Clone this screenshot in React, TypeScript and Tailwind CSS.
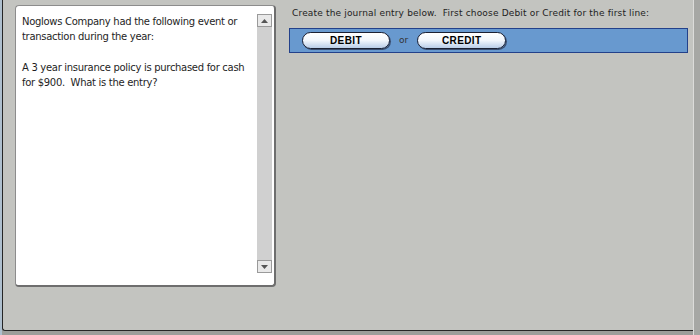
import React from "react";

function Arrow({ up }: { up?: boolean }) {
  return (
    <div className="w-[15px] h-[13px] bg-[#e9e9e9] border border-[#9a9a9a] flex items-center justify-center">
      <svg width="7" height="4" viewBox="0 0 7 4">
        {up ? <path d="M0 4 L3.5 0 L7 4 Z" fill="#555" /> : <path d="M0 0 L3.5 4 L7 0 Z" fill="#555" />}
      </svg>
    </div>
  );
}

function PillButton({ label, w }: { label: string; w: string }) {
  return (
    <button
      className={`${w} h-[17px] rounded-full border-[1.5px] border-[#1b2033] bg-gradient-to-b from-white via-[#f2f6fc] to-[#b9cde8] shadow-[1px_1px_0_#3a4e70] flex items-center justify-center text-[10px] font-bold text-black tracking-[0.4px]`}
      style={{ fontFamily: '"Liberation Sans", Arial, sans-serif' }}
    >
      {label}
    </button>
  );
}

export default function App() {
  return (
    <div className="w-[700px] h-[335px] flex bg-[#a3a4a1]" style={{ fontFamily: '"DejaVu Sans", Verdana, sans-serif' }}>
      <div className="w-[2px] h-full bg-[#aebfce]" />
      <div className="flex-1 flex flex-col">
        <div className="flex-1 flex bg-[#c3c4c0] border-l border-b border-[#252525] rounded-bl-[3px] pl-[12px] pt-[5px]">
          <div className="w-[261px] h-[282px] bg-white border border-[#8c8c8c] border-r-2 border-b-2 border-r-[#6e6e6e] border-b-[#6e6e6e] rounded-[4px] flex">
            <div className="flex-1 pl-[6px] pt-[8px] text-[10px] leading-[15px] tracking-[-0.3px] text-[#1e1e1e]">
              <p>Noglows Company had the following event or transaction during the year:</p>
              <p className="mt-[16px]">A 3 year insurance policy is purchased for cash for $900.&nbsp; What is the entry?</p>
            </div>
            <div className="w-[15px] mt-[8px] mb-[12px] mr-[2px] flex flex-col bg-[#d0d0d0]">
              <Arrow up />
              <div className="flex-1" />
              <Arrow />
            </div>
          </div>
          <div className="flex-1 flex flex-col pl-[13px] pr-[5px]">
            <div className="h-[23px] pl-[3px] pt-[1px] text-[9px] leading-[14px] tracking-[0.17px] text-[#222]">
              Create the journal entry below.&nbsp; First choose Debit or Credit for the first line:
            </div>
            <div className="h-[25px] bg-[#6899cf] border border-[#23418a] flex items-center pl-[12px]">
              <PillButton label="DEBIT" w="w-[88px]" />
              <span className="mx-[9px] text-[9px] text-[#333]">or</span>
              <PillButton label="CREDIT" w="w-[89px]" />
            </div>
          </div>
        </div>
        <div className="h-[4px] bg-[#9c9d9a]" />
      </div>
      <div className="w-[7px] h-full bg-[#a6a7a4] border-l border-[#dcdcda]" />
    </div>
  );
}
